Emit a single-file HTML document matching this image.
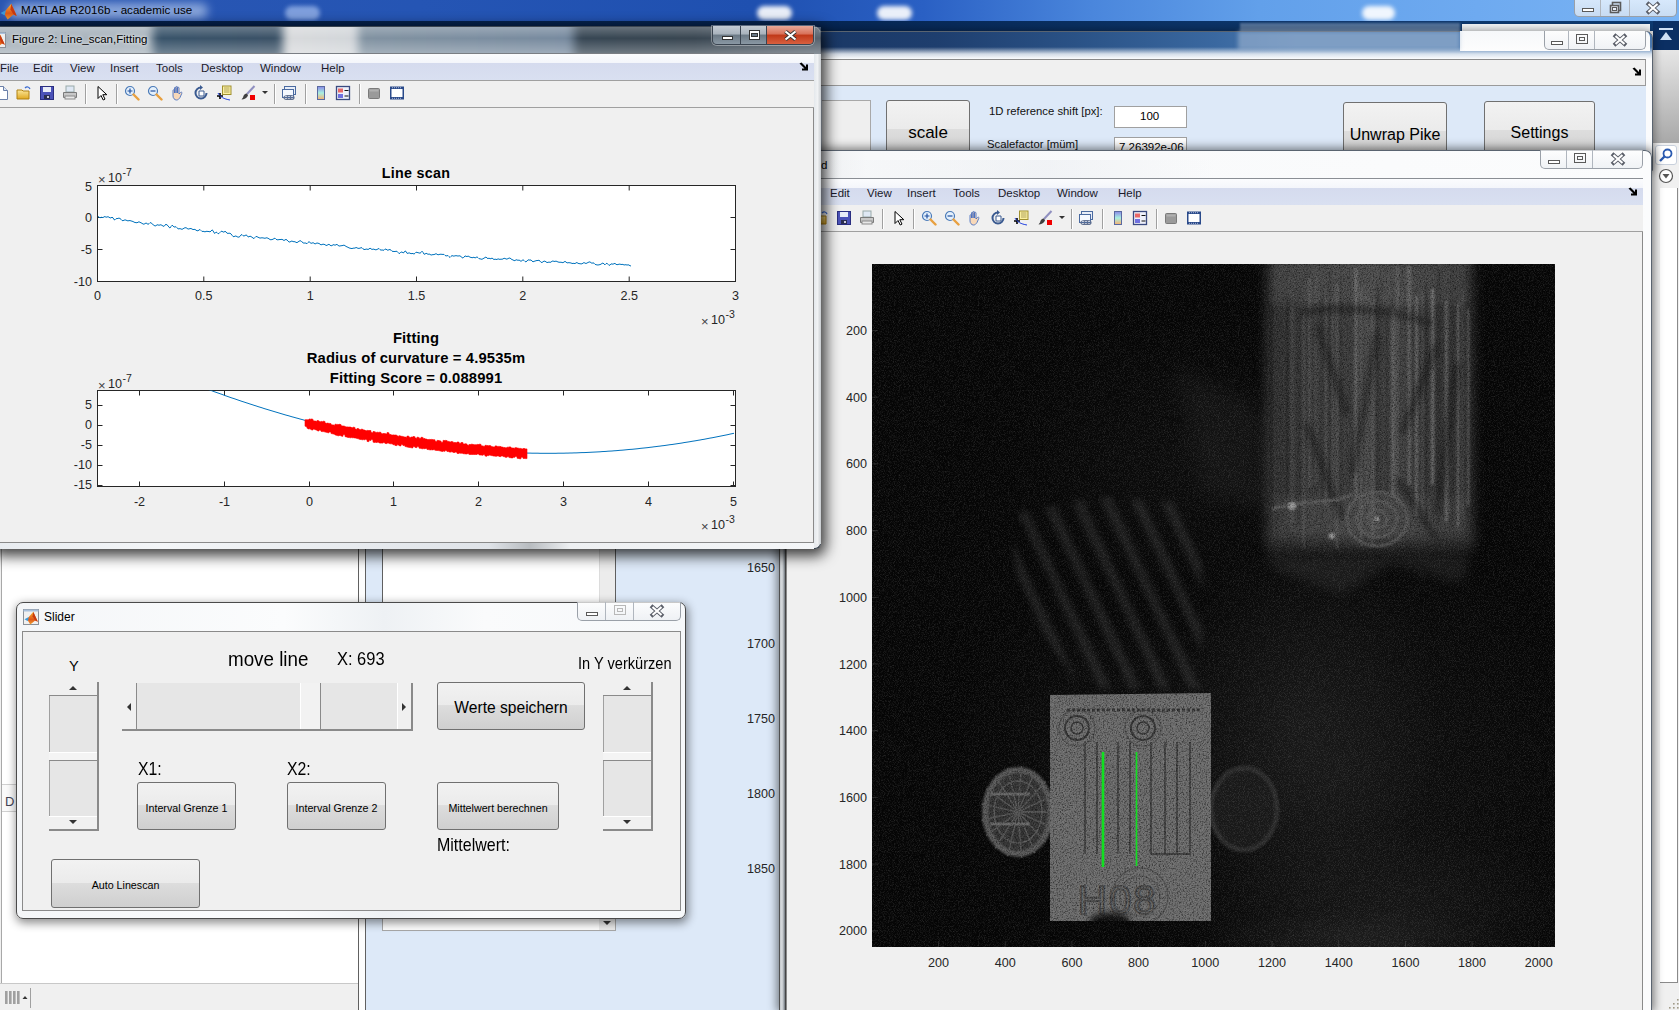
<!DOCTYPE html><html><head><meta charset="utf-8"><style>
*{box-sizing:border-box;margin:0;padding:0}
html,body{width:1679px;height:1010px;overflow:hidden;background:#f0f0f0;font-family:"Liberation Sans",sans-serif;position:relative}
.a{position:absolute}
.t{position:absolute;white-space:nowrap;line-height:1}
.mn{position:absolute;white-space:nowrap;line-height:1;font-size:11.5px;color:#1a1a2a}
.btn{position:absolute;border:1px solid #707070;border-radius:3px;background:linear-gradient(#f2f2f2 0%,#ebebeb 48%,#dddddd 49%,#cfcfcf 100%);text-align:center;color:#000;white-space:nowrap}
svg{position:absolute;overflow:visible}
</style></head><body>

<svg width="0" height="0" style="position:absolute">
<defs>
<linearGradient id="gcb" x1="0" y1="0" x2="0" y2="1"><stop offset="0" stop-color="#8a88e8"/><stop offset=".5" stop-color="#a8f0e0"/><stop offset="1" stop-color="#f8b070"/></linearGradient>
<linearGradient id="gfold" x1="0" y1="0" x2="0" y2="1"><stop offset="0" stop-color="#fbe79a"/><stop offset="1" stop-color="#e0a820"/></linearGradient>
<symbol id="i-new" viewBox="0 0 16 16"><path d="M2.5 1.5h7l4 4v9h-11z" fill="#fff" stroke="#6a7fa8"/><path d="M9.5 1.5v4h4" fill="#dde6f4" stroke="#6a7fa8"/></symbol>
<symbol id="i-open" viewBox="0 0 16 16"><path d="M1 5h5l1 1h6v8H1z" fill="url(#gfold)" stroke="#b08010"/><path d="M9 3c2-2 4-1 5 1" fill="none" stroke="#3a6ad0" stroke-width="1.3"/></symbol>
<symbol id="i-save" viewBox="0 0 16 16"><rect x="1.5" y="1.5" width="13" height="13" fill="#4b52b8" stroke="#2a2e80"/><rect x="4" y="2" width="8" height="5" fill="#e8ecf8"/><rect x="5" y="10" width="6" height="4" fill="#2a2e50"/><rect x="8" y="11" width="2" height="2" fill="#ccd"/></symbol>
<symbol id="i-print" viewBox="0 0 16 16"><rect x="4" y="1" width="8" height="6" fill="#dfe8f4" stroke="#9aa"/><path d="M1.5 7.5h13v5h-13z" fill="#c8c8c8" stroke="#7a7a7a"/><rect x="3" y="11" width="10" height="3" fill="#e8e8e8" stroke="#8a8a8a"/></symbol>
<symbol id="i-arrow" viewBox="0 0 16 16"><path d="M4 1.5v12l3-3 2.2 4.5 1.8-.9-2.2-4.4h4z" fill="#fff" stroke="#000" stroke-linejoin="round"/></symbol>
<symbol id="i-zin" viewBox="0 0 16 16"><circle cx="6" cy="6" r="4.5" fill="#e4f0fc" stroke="#4a7ab8" stroke-width="1.2"/><path d="M9.5 9.5l5 5" stroke="#e8a040" stroke-width="2.4" stroke-linecap="round"/><path d="M3.5 6h5M6 3.5v5" stroke="#2050a0" stroke-width="1.2"/></symbol>
<symbol id="i-zout" viewBox="0 0 16 16"><circle cx="6" cy="6" r="4.5" fill="#e4f0fc" stroke="#4a7ab8" stroke-width="1.2"/><path d="M9.5 9.5l5 5" stroke="#e8a040" stroke-width="2.4" stroke-linecap="round"/><path d="M3.5 6h5" stroke="#2050a0" stroke-width="1.2"/></symbol>
<symbol id="i-pan" viewBox="0 0 16 16"><path d="M3 9V5.5c0-1 1.5-1 1.5 0V8V3c0-1 1.5-1 1.5 0v5V2.2c0-1 1.5-1 1.5 0V8V3c0-1 1.5-1 1.5 0v6l1.5-1.5c.8-.8 2 0 1.3.9L10 12.5c-1 1.5-2 2.5-3.5 2.5C4.5 15 3 13 3 11z" fill="#f8d8b8" stroke="#4a70c0" stroke-width=".9"/></symbol>
<symbol id="i-rot" viewBox="0 0 16 16"><path d="M13.5 8A5.5 5.5 0 1 1 8 2.5" fill="none" stroke="#3a5a90" stroke-width="2"/><path d="M7 0l3 2.5L7 5z" fill="#3a5a90"/><path d="M6 6h5v5H6z" fill="#fff" stroke="#3a5a90"/></symbol>
<symbol id="i-dcur" viewBox="0 0 16 16"><rect x="6.5" y="1" width="8.5" height="8.5" fill="#fbf0a0" stroke="#a09030"/><path d="M8 3h5.5M8 5h5.5M8 7h5.5" stroke="#a09050" stroke-width=".8"/><path d="M1 11h6M4 8v6" stroke="#000" stroke-width="1.6"/><path d="M2 8c2 4 6 6 12 7" fill="none" stroke="#2040e0" stroke-width="1"/></symbol>
<symbol id="i-brush" viewBox="0 0 16 16"><path d="M14.5 1L7 9" stroke="#9090c0" stroke-width="2"/><path d="M7 8.5c-2 0-3.5 1.5-4 4L1.5 14.5c2.5 0 5.5-1.5 6.5-4z" fill="#404040"/><rect x="10" y="10" width="5" height="5" fill="#f00000"/></symbol>
<symbol id="i-link" viewBox="0 0 16 16"><rect x="3.5" y="1.5" width="11" height="8" fill="#e8eef8" stroke="#4a6aa0"/><rect x="1.5" y="4.5" width="11" height="8" fill="#f4f8ff" stroke="#4a6aa0"/><path d="M3 12.5c0-2 2-2 4-2s3 0 3 2-1 2-3 2-4 0-4-2z" fill="none" stroke="#607090" stroke-width="1.2"/><path d="M6 12.5c0-2 2-2 4-2s3 0 3 2-1 2-3 2-4 0-4-2z" fill="none" stroke="#607090" stroke-width="1.2"/></symbol>
<symbol id="i-cbar" viewBox="0 0 16 16"><rect x="4.5" y="1.5" width="7" height="13" fill="url(#gcb)" stroke="#5a6aa0"/></symbol>
<symbol id="i-leg" viewBox="0 0 16 16"><rect x="1.5" y="1.5" width="13" height="13" fill="#eef0fa" stroke="#3a4a80" stroke-width="1.3"/><rect x="3" y="3.5" width="5" height="4" fill="#e86868"/><rect x="3" y="9" width="5" height="4" fill="#7070e0"/><path d="M9.5 5.5h4M9.5 11h4" stroke="#111" stroke-width="1.2"/></symbol>
<symbol id="i-gray" viewBox="0 0 16 16"><rect x="2.5" y="3.5" width="11" height="10" rx="1" fill="#9a9a9a" stroke="#7a7a7a"/><rect x="3.5" y="4.5" width="9" height="2" fill="#b0b0b0"/></symbol>
<symbol id="i-frame" viewBox="0 0 16 16"><rect x="1" y="1.5" width="14" height="13" fill="#2a4a8a"/><rect x="2.5" y="4" width="11" height="8" fill="#fff"/><path d="M3 2.7h10M3 13.3h10" stroke="#c8d0e8" stroke-width=".8" stroke-dasharray="1 1"/></symbol>
<linearGradient id="gml" x1="0" y1="0" x2="0" y2="1"><stop offset="0" stop-color="#f8b030"/><stop offset=".6" stop-color="#e05818"/><stop offset="1" stop-color="#f0a030"/></linearGradient><symbol id="i-ml" viewBox="0 0 16 16"><path d="M0.5 9.5L5.5 6.8L8 8.8L4 11.5Z" fill="#3c9ad8"/><path d="M5.5 6.8L10.6 0.8L15.8 12.2L12.8 10.8L7.2 15.5L4.6 11.2Z" fill="url(#gml)"/><path d="M10.6 0.8L15.8 12.2L12.8 10.8L9.8 6Z" fill="#c83a10"/></symbol>
</defs></svg>

<div class="a" style="left:0px;top:0px;width:1679px;height:21px;background:linear-gradient(90deg,#2a56b2 0%,#2555b4 25%,#1f50b0 45%,#2a60c4 55%,#4a86dc 65%,#62a0ea 75%,#6eaaf0 88%,#7ab4f4 100%)"></div>
<div class="a" style="left:285px;top:6px;width:35px;height:14px;background:rgba(200,220,255,.55);border-radius:8px;filter:blur(2px)"></div>
<div class="a" style="left:757px;top:6px;width:35px;height:14px;background:rgba(255,255,255,.9);border-radius:8px;filter:blur(2px)"></div>
<div class="a" style="left:877px;top:6px;width:35px;height:14px;background:rgba(255,255,255,.9);border-radius:8px;filter:blur(2px)"></div>
<div class="a" style="left:1362px;top:6px;width:33px;height:14px;background:rgba(255,255,255,.9);border-radius:8px;filter:blur(2px)"></div>
<div class="a" style="left:8px;top:3px;width:200px;height:16px;background:rgba(215,230,250,.55);border-radius:10px;filter:blur(5px)"></div>
<svg style="left:0px;top:3px" width="17" height="17"><use href="#i-ml"/></svg>
<div class="t" style="left:21px;top:4px;font-size:11.6px;color:#000;font-weight:400;">MATLAB R2016b - academic use</div>
<div class="a" style="left:1574px;top:0px;width:103px;height:17px;border-radius:0 0 5px 5px;overflow:hidden;border:1px solid #9aa0a8;border-top:none;background:linear-gradient(rgba(255,255,255,.7),rgba(235,238,242,.7))"><div class="a" style="left:25px;top:0;width:1px;height:17px;background:#b0b6be"></div><div class="a" style="left:54px;top:0;width:1px;height:17px;background:#b0b6be"></div><div class="a" style="left:7px;top:8px;width:12px;height:4px;border:1px solid #5a5a5a;background:#fff"></div><svg style="left:34px;top:1px" width="13" height="13"><rect x="3.5" y="1.5" width="8" height="8" fill="none" stroke="#5a5a5a" stroke-width="1.6"/><rect x="1.5" y="4.5" width="8" height="7" fill="#e8eef8" stroke="#5a5a5a" stroke-width="1.6"/><rect x="3.5" y="6.5" width="4" height="3" fill="none" stroke="#5a5a5a"/></svg><svg style="left:71px;top:2px" width="14" height="12"><path d="M2.5 2l9 8M11.5 2l-9 8" stroke="#5a5e68" stroke-width="4" stroke-linecap="square"/><path d="M2.5 2l9 8M11.5 2l-9 8" stroke="#fff" stroke-width="2.2"/></svg></div>
<div class="a" style="left:0px;top:21px;width:1679px;height:10px;background:linear-gradient(90deg,#04204c 0px,#062654 820px,#0c3468 1200px,#0e3a70 1679px)"></div>
<div class="a" style="left:1240px;top:23px;width:220px;height:9px;background:rgba(160,180,205,.5);filter:blur(1px)"></div>
<div class="a" style="left:1462px;top:24px;width:188px;height:7px;background:#f4f6f8"></div>
<div class="a" style="left:1653px;top:21px;width:26px;height:29px;background:#0b2f63"></div>
<svg style="left:1657px;top:27px" width="18" height="16"><path d="M2 2h14" stroke="#cfe0f4" stroke-width="2"/><path d="M9 5l6 8H3z" fill="#cfe0f4"/></svg>
<div class="a" style="left:1653px;top:50px;width:26px;height:93px;background:linear-gradient(#e6e6e6,#a8a8a8)"></div>
<div class="a" style="left:1653px;top:143px;width:26px;height:22px;background:#f0f0f0"></div>
<div class="a" style="left:1655px;top:145px;width:22px;height:20px;background:#fff;border:1px solid #c8d0dc;border-radius:3px"></div>
<svg style="left:1658px;top:148px" width="16" height="14"><circle cx="9.5" cy="5.5" r="4" fill="none" stroke="#2a5ab0" stroke-width="1.8"/><path d="M6.5 8.5L2 13" stroke="#2a5ab0" stroke-width="2.4"/></svg>
<div class="a" style="left:1653px;top:165px;width:26px;height:23px;background:#f0f0f0"></div>
<svg style="left:1658px;top:168px" width="16" height="16"><circle cx="8" cy="8" r="6.5" fill="#fff" stroke="#555" stroke-width="1.2"/><path d="M4.5 6h7L8 10.5z" fill="#555"/></svg>
<div class="a" style="left:1653px;top:188px;width:26px;height:822px;background:#f0f0f0"></div>
<div class="a" style="left:1660px;top:188px;width:18px;height:795px;background:#fff;border-right:1px solid #8a8a8a;border-bottom:1px solid #8a8a8a"></div>
<svg style="left:1667px;top:997px" width="12" height="12"><rect x="10" y="2" width="1.6" height="1.6" fill="#a09a88"/><rect x="6" y="6" width="1.6" height="1.6" fill="#a09a88"/><rect x="10" y="6" width="1.6" height="1.6" fill="#a09a88"/><rect x="2" y="10" width="1.6" height="1.6" fill="#a09a88"/><rect x="6" y="10" width="1.6" height="1.6" fill="#a09a88"/><rect x="10" y="10" width="1.6" height="1.6" fill="#a09a88"/></svg>
<div class="a" style="left:1px;top:549px;width:1px;height:434px;background:#a8a8a8"></div>
<div class="a" style="left:2px;top:549px;width:356px;height:434px;background:#fff"></div>
<div class="a" style="left:2px;top:784px;width:14px;height:28px;border-top:1px solid #d0d0d0;border-bottom:1px solid #d0d0d0;background:#fafafa"></div>
<div class="t" style="left:5px;top:795px;font-size:13px;color:#445;font-weight:400;">D</div>
<div class="a" style="left:358px;top:549px;width:1px;height:461px;background:#606060"></div>
<div class="a" style="left:359px;top:549px;width:6px;height:461px;background:#fdfdfd"></div>
<div class="a" style="left:365px;top:549px;width:1px;height:461px;background:#606060"></div>
<div class="a" style="left:366px;top:549px;width:413px;height:461px;background:#dde9f8"></div>
<div class="a" style="left:382px;top:549px;width:1px;height:369px;background:#606060"></div>
<div class="a" style="left:383px;top:549px;width:216px;height:369px;background:#fff"></div>
<div class="a" style="left:599px;top:549px;width:16px;height:369px;background:#ececec;border-left:1px solid #dcdcdc"></div>
<div class="a" style="left:382px;top:918px;width:234px;height:13px;background:#fff;border:1px solid #a8a8a8;border-top:none"></div>
<div class="a" style="left:599px;top:918px;width:16px;height:12px;background:#ececec"></div>
<svg style="left:603px;top:921px" width="8" height="5"><path d="M0 0h8L4 4z" fill="#333"/></svg>
<div class="a" style="left:0px;top:983px;width:358px;height:27px;background:#f0f0f0;border-top:1px solid #c8c8c8"></div>
<svg style="left:4px;top:990px" width="28" height="14"><rect x="1" y="1" width="2.6" height="13" fill="#a0a0a0"/><rect x="5" y="1" width="2.6" height="13" fill="#a0a0a0"/><rect x="9" y="1" width="2.6" height="13" fill="#a0a0a0"/><rect x="13" y="1" width="2.6" height="13" fill="#a0a0a0"/><path d="M18.5 9h5l-2.5-3z" fill="#333"/></svg>
<div class="a" style="left:30px;top:988px;width:1px;height:20px;background:#a0a0a0"></div>
<div class="t" style="left:700px;width:75px;text-align:right;top:561.5px;font-size:12.6px;color:#262626">1650</div>
<div class="t" style="left:700px;width:75px;text-align:right;top:637.5px;font-size:12.6px;color:#262626">1700</div>
<div class="t" style="left:700px;width:75px;text-align:right;top:712.5px;font-size:12.6px;color:#262626">1750</div>
<div class="t" style="left:700px;width:75px;text-align:right;top:787.5px;font-size:12.6px;color:#262626">1800</div>
<div class="t" style="left:700px;width:75px;text-align:right;top:862.5px;font-size:12.6px;color:#262626">1850</div>
<div class="a" style="left:615px;top:549px;width:1px;height:369px;background:#606060"></div>
<div class="a" style="left:815px;top:31px;width:838px;height:140px;box-shadow:0 0 8px 1px rgba(0,0,0,.4);border-radius:7px 7px 0 0"></div>
<div class="a" style="left:815px;top:31px;width:838px;height:140px;border:1px solid #5a6470;border-radius:7px 7px 0 0;background:linear-gradient(rgba(255,255,255,0) 0px,rgba(255,255,255,0) 15px,rgba(240,244,248,.85) 22px,#fbfcfd 27px),linear-gradient(90deg,#1a3866 0px,#1e3e6e 120px,#2a5286 260px,#3a68a0 400px,#4a78ae 480px)"></div>
<div class="a" style="left:1460px;top:31px;width:190px;height:20px;background:linear-gradient(#f6f8fa,#fdfdfd);border-radius:0 6px 0 0"></div>
<div class="a" style="left:1238px;top:31px;width:222px;height:19px;background:rgba(170,190,215,.55);filter:blur(2px)"></div>
<div class="a" style="left:1544px;top:31px;width:102px;height:19px;border-radius:0 0 5px 5px;overflow:hidden;border:1px solid #9aa0a8;border-top:none;background:linear-gradient(rgba(255,255,255,.7),rgba(235,238,242,.7))"><div class="a" style="left:23px;top:0;width:1px;height:19px;background:#b0b6be"></div><div class="a" style="left:49px;top:0;width:1px;height:19px;background:#b0b6be"></div><div class="a" style="left:6px;top:10px;width:12px;height:4px;border:1px solid #5a5a5a;background:#fff"></div><div class="a" style="left:31px;top:3px;width:12px;height:10px;border:1px solid #5a5a5a"><div class="a" style="left:2px;top:2px;width:6px;height:4px;border:1px solid #5a5a5a"></div></div><svg style="left:68px;top:3px" width="14" height="12"><path d="M2.5 2l9 8M11.5 2l-9 8" stroke="#5a5e68" stroke-width="4" stroke-linecap="square"/><path d="M2.5 2l9 8M11.5 2l-9 8" stroke="#fff" stroke-width="2.2"/></svg></div>
<div class="a" style="left:821px;top:59px;width:825px;height:27px;background:#f0f0f0;border-top:1px solid #8a8a8a;border-bottom:1px solid #9a9a9a;border-right:1px solid #9a9a9a"></div>
<svg style="left:1631px;top:66px" width="12" height="12"><path d="M1.5 2.5l2-1 4.5 4.5V3.5h2v6h-6v-2h2.5z" fill="#000"/></svg>
<div class="a" style="left:821px;top:86px;width:825px;height:70px;background:#dde9f8"></div>
<div class="a" style="left:822px;top:100px;width:49px;height:56px;background:#efefef;border:1px solid #a8a8a8;border-left:none"></div>
<div class="btn" style="left:886px;top:100px;width:84px;height:60px;font-size:17px;padding-top:22px">scale</div>
<div class="t" style="left:989px;top:106px;font-size:11.3px;color:#111;font-weight:400;">1D reference shift [px]:</div>
<div class="a" style="left:1114px;top:106px;width:73px;height:22px;background:#fff;border:1px solid #a0a0a0"></div>
<div class="t" style="left:1140px;top:111px;font-size:11.5px;color:#000;font-weight:400;">100</div>
<div class="t" style="left:987px;top:139px;font-size:11.3px;color:#111;font-weight:400;">Scalefactor [m&uuml;m]</div>
<div class="a" style="left:1114px;top:137px;width:73px;height:22px;background:#fff;border:1px solid #a0a0a0"></div>
<div class="t" style="left:1119px;top:142px;font-size:11.5px;color:#000;font-weight:400;">7.26392e-06</div>
<div class="btn" style="left:1343px;top:102px;width:104px;height:60px;font-size:16px;padding-top:22.5px">Unwrap Pike</div>
<div class="btn" style="left:1484px;top:101px;width:111px;height:60px;font-size:16px;padding-top:21.5px">Settings</div>
<div class="a" style="left:779px;top:150px;width:873px;height:860px;box-shadow:0 0 10px 2px rgba(0,0,0,.5);border-radius:7px 7px 0 0"></div>
<div class="a" style="left:779px;top:150px;width:873px;height:860px;border:1px solid #5a6470;border-bottom:none;border-radius:7px 7px 0 0;background:linear-gradient(90deg,#e6e9ec,#f8f9fa 10%,#fbfcfd)"></div>
<div class="a" style="left:786px;top:160px;width:857px;height:19px;background:linear-gradient(90deg,rgba(255,255,255,0),rgba(235,238,242,.6) 30%,rgba(255,255,255,0) 50%)"></div>
<div class="t" style="left:821px;top:160px;font-size:11.5px;color:#000;font-weight:400;">d</div>
<div class="a" style="left:1540px;top:150px;width:103px;height:19px;border-radius:0 0 5px 5px;overflow:hidden;border:1px solid #9aa0a8;border-top:none;background:linear-gradient(rgba(255,255,255,.7),rgba(235,238,242,.7))"><div class="a" style="left:25px;top:0;width:1px;height:19px;background:#b0b6be"></div><div class="a" style="left:51px;top:0;width:1px;height:19px;background:#b0b6be"></div><div class="a" style="left:7px;top:10px;width:12px;height:4px;border:1px solid #5a5a5a;background:#fff"></div><div class="a" style="left:33px;top:3px;width:12px;height:10px;border:1px solid #5a5a5a"><div class="a" style="left:2px;top:2px;width:6px;height:4px;border:1px solid #5a5a5a"></div></div><svg style="left:70px;top:3px" width="14" height="12"><path d="M2.5 2l9 8M11.5 2l-9 8" stroke="#5a5e68" stroke-width="4" stroke-linecap="square"/><path d="M2.5 2l9 8M11.5 2l-9 8" stroke="#fff" stroke-width="2.2"/></svg></div>
<div class="a" style="left:786px;top:179px;width:857px;height:831px;background:#f0f0f0;border-left:1px solid #8a8a8a;border-right:1px solid #8a8a8a"></div>
<div class="a" style="left:779px;top:549px;width:7px;height:461px;background:linear-gradient(90deg,#505050 0px,#505050 1px,#c4c8cc 1px,#d8dcdf 3px,#9aa0a6 5px,#6a7076 6px,#454545 6px,#454545 7px)"></div>
<div class="a" style="left:786px;top:178px;width:857px;height:1px;background:#8a8e94"></div>
<div class="a" style="left:786px;top:179px;width:857px;height:27px;background:linear-gradient(#fbfcfe 0%,#f4f6fb 33%,#d5dbee 36%,#d9e0f1 100%);border-bottom:1px solid #a0a0a0"></div>
<div class="mn" style="left:830px;top:187.5px">Edit</div>
<div class="mn" style="left:867px;top:187.5px">View</div>
<div class="mn" style="left:907px;top:187.5px">Insert</div>
<div class="mn" style="left:953px;top:187.5px">Tools</div>
<div class="mn" style="left:998px;top:187.5px">Desktop</div>
<div class="mn" style="left:1057px;top:187.5px">Window</div>
<div class="mn" style="left:1118px;top:187.5px">Help</div>
<svg style="left:1627px;top:186px" width="12" height="12"><path d="M1.5 2.5l2-1 4.5 4.5V3.5h2v6h-6v-2h2.5z" fill="#000"/></svg>
<div class="a" style="left:786px;top:205px;width:857px;height:27px;background:#f0f0f0;border-bottom:1px solid #a0a0a0"></div>
<svg style="left:791px;top:210px" width="16" height="16"><use href="#i-new"/></svg>
<svg style="left:813px;top:210px" width="16" height="16"><use href="#i-open"/></svg>
<svg style="left:836px;top:210px" width="16" height="16"><use href="#i-save"/></svg>
<svg style="left:859px;top:210px" width="16" height="16"><use href="#i-print"/></svg>
<div class="a" style="left:882px;top:209px;width:1px;height:20px;background:#a0a0a0;box-shadow:1px 0 0 #fff"></div>
<svg style="left:891px;top:210px" width="16" height="16"><use href="#i-arrow"/></svg>
<div class="a" style="left:913px;top:209px;width:1px;height:20px;background:#a0a0a0;box-shadow:1px 0 0 #fff"></div>
<svg style="left:921px;top:210px" width="16" height="16"><use href="#i-zin"/></svg>
<svg style="left:944px;top:210px" width="16" height="16"><use href="#i-zout"/></svg>
<svg style="left:967px;top:210px" width="16" height="16"><use href="#i-pan"/></svg>
<svg style="left:990px;top:210px" width="16" height="16"><use href="#i-rot"/></svg>
<svg style="left:1013px;top:210px" width="16" height="16"><use href="#i-dcur"/></svg>
<svg style="left:1037px;top:210px" width="16" height="16"><use href="#i-brush"/></svg>
<svg style="left:1059px;top:216px" width="6" height="4"><path d="M0 0h6L3 3z" fill="#333"/></svg>
<div class="a" style="left:1071px;top:209px;width:1px;height:20px;background:#a0a0a0;box-shadow:1px 0 0 #fff"></div>
<svg style="left:1078px;top:210px" width="16" height="16"><use href="#i-link"/></svg>
<div class="a" style="left:1102px;top:209px;width:1px;height:20px;background:#a0a0a0;box-shadow:1px 0 0 #fff"></div>
<svg style="left:1110px;top:210px" width="16" height="16"><use href="#i-cbar"/></svg>
<svg style="left:1132px;top:210px" width="16" height="16"><use href="#i-leg"/></svg>
<div class="a" style="left:1156px;top:209px;width:1px;height:20px;background:#a0a0a0;box-shadow:1px 0 0 #fff"></div>
<svg style="left:1163px;top:210px" width="16" height="16"><use href="#i-gray"/></svg>
<svg style="left:1186px;top:210px" width="16" height="16"><use href="#i-frame"/></svg>
<svg style="left:872px;top:264px;overflow:hidden" width="683" height="683" viewBox="0 0 683 683"><defs>
<filter id="nz" x="0" y="0" width="100%" height="100%" color-interpolation-filters="sRGB"><feTurbulence type="fractalNoise" baseFrequency="1.2" numOctaves="1" seed="3"/><feColorMatrix type="matrix" values="0 0 0 0 1  0 0 0 0 1  0 0 0 0 1  2.6 0 0 0 -1.15"/></filter>
<filter id="nzd" x="0" y="0" width="100%" height="100%" color-interpolation-filters="sRGB"><feTurbulence type="fractalNoise" baseFrequency=".7" numOctaves="2" seed="9"/><feColorMatrix type="matrix" values="0 0 0 0 0  0 0 0 0 0  0 0 0 0 0  2.4 0 0 0 -1.1"/></filter>
<filter id="b6" x="-30%" y="-30%" width="160%" height="160%" color-interpolation-filters="sRGB"><feGaussianBlur stdDeviation="6"/></filter>
<filter id="b3" x="-30%" y="-30%" width="160%" height="160%" color-interpolation-filters="sRGB"><feGaussianBlur stdDeviation="3"/></filter>
<filter id="b10" x="-30%" y="-30%" width="160%" height="160%" color-interpolation-filters="sRGB"><feGaussianBlur stdDeviation="10"/></filter>
<filter id="b1" x="-30%" y="-30%" width="160%" height="160%" color-interpolation-filters="sRGB"><feGaussianBlur stdDeviation="1"/></filter>
<radialGradient id="hz1"><stop offset="0" stop-color="#fff" stop-opacity=".045"/><stop offset="1" stop-color="#fff" stop-opacity="0"/></radialGradient>
<radialGradient id="hz2"><stop offset="0" stop-color="#fff" stop-opacity=".025"/><stop offset="1" stop-color="#fff" stop-opacity="0"/></radialGradient>
<linearGradient id="blk" x1="0" y1="0" x2="1" y2="0"><stop offset="0" stop-color="#333"/><stop offset=".5" stop-color="#424242"/><stop offset="1" stop-color="#303030"/></linearGradient>
<pattern id="vstr" width="13" height="40" patternUnits="userSpaceOnUse"><rect x="2" width="2" height="40" fill="#fff" fill-opacity=".12"/><rect x="7" width="3" height="40" fill="#000" fill-opacity=".15"/></pattern>
<pattern id="dstr" width="27" height="27" patternUnits="userSpaceOnUse" patternTransform="rotate(-25)"><rect width="10" height="27" fill="#fff" fill-opacity=".09"/></pattern>
<clipPath id="rcp"><path d="M178 431 L339 429 L339 657 L178 657 Z"/></clipPath>
</defs><rect width="683" height="683" fill="#050505"/><ellipse cx="470" cy="520" rx="260" ry="260" fill="url(#hz1)"/><ellipse cx="430" cy="460" rx="140" ry="190" fill="url(#hz1)"/><ellipse cx="480" cy="675" rx="160" ry="30" fill="url(#hz1)"/><g filter="url(#b6)"><path d="M392 270 L604 270 L590 320 L520 300 L470 330 L400 305 Z" fill="#fff" fill-opacity=".07"/></g><ellipse cx="300" cy="200" rx="170" ry="150" fill="url(#hz2)"/><ellipse cx="520" cy="650" rx="200" ry="90" fill="url(#hz1)"/><ellipse cx="220" cy="470" rx="140" ry="160" fill="url(#hz2)"/><g filter="url(#b6)"><rect x="394" y="-10" width="208" height="292" fill="url(#blk)"/></g><g filter="url(#b3)"><rect x="400" y="0" width="196" height="40" fill="#fff" fill-opacity=".07"/><rect x="400" y="232" width="196" height="40" fill="#fff" fill-opacity=".05"/></g><g filter="url(#b1)"><rect x="398.0" y="39" width="3" height="210" fill="#000" fill-opacity="0.23"/><rect x="405.0" y="31" width="2" height="240" fill="#000" fill-opacity="0.09"/><rect x="408.3" y="45" width="2.5" height="217" fill="#000" fill-opacity="0.08"/><rect x="413.9" y="31" width="3" height="199" fill="#000" fill-opacity="0.25"/><rect x="418.0" y="44" width="4" height="215" fill="#fff" fill-opacity="0.06"/><rect x="425.7" y="26" width="2.5" height="236" fill="#000" fill-opacity="0.14"/><rect x="430.9" y="50" width="1.5" height="235" fill="#fff" fill-opacity="0.15"/><rect x="436.4" y="14" width="2.5" height="210" fill="#fff" fill-opacity="0.12"/><rect x="442.6" y="3" width="3" height="218" fill="#fff" fill-opacity="0.07"/><rect x="449.0" y="23" width="2" height="260" fill="#000" fill-opacity="0.09"/><rect x="453.3" y="34" width="1.5" height="208" fill="#fff" fill-opacity="0.17"/><rect x="456.9" y="6" width="1.5" height="230" fill="#000" fill-opacity="0.25"/><rect x="459.8" y="34" width="1.5" height="198" fill="#fff" fill-opacity="0.15"/><rect x="464.1" y="20" width="2" height="265" fill="#fff" fill-opacity="0.14"/><rect x="467.1" y="11" width="4" height="235" fill="#000" fill-opacity="0.11"/><rect x="475.1" y="11" width="4" height="226" fill="#000" fill-opacity="0.07"/><rect x="482.8" y="4" width="2.5" height="230" fill="#fff" fill-opacity="0.22"/><rect x="488.5" y="23" width="1.5" height="260" fill="#fff" fill-opacity="0.18"/><rect x="492.7" y="31" width="4" height="209" fill="#fff" fill-opacity="0.08"/><rect x="498.5" y="37" width="4" height="244" fill="#fff" fill-opacity="0.10"/><rect x="504.2" y="21" width="3" height="206" fill="#000" fill-opacity="0.24"/><rect x="508.3" y="13" width="2.5" height="261" fill="#000" fill-opacity="0.10"/><rect x="513.9" y="49" width="2.5" height="179" fill="#000" fill-opacity="0.16"/><rect x="519.1" y="46" width="4" height="187" fill="#fff" fill-opacity="0.18"/><rect x="524.1" y="2" width="2.5" height="236" fill="#fff" fill-opacity="0.14"/><rect x="529.5" y="23" width="2" height="219" fill="#fff" fill-opacity="0.07"/><rect x="535.1" y="2" width="4" height="219" fill="#fff" fill-opacity="0.17"/><rect x="543.2" y="32" width="2.5" height="220" fill="#fff" fill-opacity="0.25"/><rect x="549.3" y="23" width="2.5" height="221" fill="#fff" fill-opacity="0.08"/><rect x="553.0" y="18" width="2" height="247" fill="#000" fill-opacity="0.22"/><rect x="559.1" y="25" width="3" height="196" fill="#fff" fill-opacity="0.25"/><rect x="565.4" y="4" width="3" height="258" fill="#000" fill-opacity="0.17"/><rect x="572.9" y="37" width="3" height="221" fill="#fff" fill-opacity="0.20"/><rect x="578.4" y="1" width="4" height="258" fill="#000" fill-opacity="0.07"/><rect x="585.1" y="39" width="2" height="224" fill="#fff" fill-opacity="0.25"/><rect x="589.8" y="31" width="1.5" height="223" fill="#fff" fill-opacity="0.13"/><rect x="595.0" y="45" width="2.5" height="197" fill="#fff" fill-opacity="0.19"/></g><g stroke="#141414" stroke-width="5" fill="none" filter="url(#b3)" opacity=".75"><path d="M445 60 L475 150 M505 70 L480 210 M565 80 L530 170 M585 100 L565 250 M435 160 L470 255 M525 215 L565 275 M430 50 C460 40 520 45 560 60"/></g><g filter="url(#b1)" fill="none" stroke="#5e5e5e" stroke-width="2.5"><ellipse cx="505" cy="255" rx="30" ry="27"/><ellipse cx="505" cy="255" rx="20" ry="18"/><ellipse cx="505" cy="255" rx="10" ry="9"/><path d="M400 245 C430 235 470 240 480 230" stroke-width="3"/></g><g filter="url(#b1)" fill="#999"><circle cx="420" cy="242" r="4"/><circle cx="460" cy="272" r="3"/><circle cx="505" cy="255" r="2.5"/></g><rect x="385" y="0" width="225" height="295" filter="url(#nzd)" opacity=".6"/><g filter="url(#b3)"><path d="M135 250 L230 232 L320 240 L330 300 L330 425 L210 425 L150 340 Z" fill="url(#dstr)"/></g><g filter="url(#b10)"><path d="M300 100 L390 140 L400 250 L330 230 Z" fill="#fff" fill-opacity=".04"/></g><clipPath id="ecp"><ellipse cx="146" cy="548" rx="37" ry="46"/></clipPath><g filter="url(#b1)"><ellipse cx="146" cy="548" rx="33" ry="42" fill="#343434" stroke="#5a5a5a" stroke-width="6"/></g><g clip-path="url(#ecp)" stroke="#555" stroke-width="1.5" fill="none"><path d="M146 548 L186.0 548.0"/><path d="M146 548 L183.3 565.3"/><path d="M146 548 L175.6 580.3"/><path d="M146 548 L163.8 591.0"/><path d="M146 548 L149.7 595.8"/><path d="M146 548 L135.1 594.2"/><path d="M146 548 L121.9 586.3"/><path d="M146 548 L112.0 573.3"/><path d="M146 548 L106.7 556.9"/><path d="M146 548 L106.7 539.3"/><path d="M146 548 L112.0 522.8"/><path d="M146 548 L121.8 509.8"/><path d="M146 548 L135.0 501.9"/><path d="M146 548 L149.6 500.2"/><path d="M146 548 L163.7 505.0"/><path d="M146 548 L175.5 515.6"/><path d="M146 548 L183.3 530.5"/><path d="M146 548 L186.0 547.8"/><ellipse cx="146" cy="548" rx="24" ry="31"/><path d="M118 530h40M118 560h40" stroke="#666" stroke-width="3"/><rect x="100" y="500" width="90" height="100" filter="url(#nzd)" opacity=".55"/></g><g filter="url(#b1)"><ellipse cx="372" cy="545" rx="33" ry="41" fill="#181818" stroke="#2a2a2a" stroke-width="5"/></g><path d="M178 431 L339 429 L339 657 L178 657 Z" fill="#6c6c6c"/><g clip-path="url(#rcp)"><g fill="none" stroke="#363636" stroke-width="1.4"><path d="M213 478 V590"/><path d="M225 478 V590"/><path d="M246 478 V590"/><path d="M258 478 V590"/><path d="M279 478 V590"/><path d="M293 478 V590"/><path d="M305 478 V590"/><path d="M318 478 V590"/><path d="M279 590 H318"/><circle cx="205" cy="464" r="12" stroke-width="2"/><circle cx="271" cy="464" r="12" stroke-width="2"/><circle cx="205" cy="464" r="6"/><circle cx="271" cy="464" r="6"/><circle cx="205" cy="464" r="18" stroke="#555"/><circle cx="271" cy="464" r="18" stroke="#555"/><text x="206" y="650" font-family="Liberation Sans" font-size="40" letter-spacing="2" stroke="#4a4a4a" stroke-width="2" fill="none">H08</text><circle cx="268" cy="632" r="28" stroke="#555" stroke-width="1.5"/><circle cx="268" cy="632" r="20" stroke="#5a5a5a" stroke-width="1.5"/><path d="M195 446 H330" stroke-dasharray="3 2" stroke-width="3"/></g><rect x="170" y="420" width="180" height="250" filter="url(#nzd)" opacity=".6"/><g filter="url(#b3)"><ellipse cx="238" cy="657" rx="20" ry="8" fill="#0c0c0c"/></g></g><rect width="683" height="683" filter="url(#nz)" opacity=".13"/><path d="M231 488 V603" stroke="#10e020" stroke-width="2.6"/><path d="M264.5 488 V602" stroke="#10e020" stroke-width="1.6"/></svg>
<svg style="left:0;top:0" width="1679" height="1010"><path d="M938.5 947v-6M872 330.5h6" stroke="#8a8a8a" stroke-opacity=".25" stroke-width="1"/><path d="M1005.2 947v-6M872 397.2h6" stroke="#8a8a8a" stroke-opacity=".25" stroke-width="1"/><path d="M1071.9 947v-6M872 463.9h6" stroke="#8a8a8a" stroke-opacity=".25" stroke-width="1"/><path d="M1138.6 947v-6M872 530.6h6" stroke="#8a8a8a" stroke-opacity=".25" stroke-width="1"/><path d="M1205.3 947v-6M872 597.3h6" stroke="#8a8a8a" stroke-opacity=".25" stroke-width="1"/><path d="M1272.0 947v-6M872 664.0h6" stroke="#8a8a8a" stroke-opacity=".25" stroke-width="1"/><path d="M1338.7 947v-6M872 730.7h6" stroke="#8a8a8a" stroke-opacity=".25" stroke-width="1"/><path d="M1405.4 947v-6M872 797.4h6" stroke="#8a8a8a" stroke-opacity=".25" stroke-width="1"/><path d="M1472.1 947v-6M872 864.1h6" stroke="#8a8a8a" stroke-opacity=".25" stroke-width="1"/><path d="M1538.8 947v-6M872 930.8h6" stroke="#8a8a8a" stroke-opacity=".25" stroke-width="1"/></svg>
<div class="t" style="left:908.5px;width:60px;text-align:center;top:956.5px;font-size:12.6px;color:#262626">200</div>
<div class="t" style="left:800px;width:67px;text-align:right;top:325.0px;font-size:12.6px;color:#262626">200</div>
<div class="t" style="left:975.2px;width:60px;text-align:center;top:956.5px;font-size:12.6px;color:#262626">400</div>
<div class="t" style="left:800px;width:67px;text-align:right;top:391.7px;font-size:12.6px;color:#262626">400</div>
<div class="t" style="left:1041.9px;width:60px;text-align:center;top:956.5px;font-size:12.6px;color:#262626">600</div>
<div class="t" style="left:800px;width:67px;text-align:right;top:458.4px;font-size:12.6px;color:#262626">600</div>
<div class="t" style="left:1108.6px;width:60px;text-align:center;top:956.5px;font-size:12.6px;color:#262626">800</div>
<div class="t" style="left:800px;width:67px;text-align:right;top:525.1px;font-size:12.6px;color:#262626">800</div>
<div class="t" style="left:1175.3px;width:60px;text-align:center;top:956.5px;font-size:12.6px;color:#262626">1000</div>
<div class="t" style="left:800px;width:67px;text-align:right;top:591.8px;font-size:12.6px;color:#262626">1000</div>
<div class="t" style="left:1242.0px;width:60px;text-align:center;top:956.5px;font-size:12.6px;color:#262626">1200</div>
<div class="t" style="left:800px;width:67px;text-align:right;top:658.5px;font-size:12.6px;color:#262626">1200</div>
<div class="t" style="left:1308.7px;width:60px;text-align:center;top:956.5px;font-size:12.6px;color:#262626">1400</div>
<div class="t" style="left:800px;width:67px;text-align:right;top:725.2px;font-size:12.6px;color:#262626">1400</div>
<div class="t" style="left:1375.4px;width:60px;text-align:center;top:956.5px;font-size:12.6px;color:#262626">1600</div>
<div class="t" style="left:800px;width:67px;text-align:right;top:791.9px;font-size:12.6px;color:#262626">1600</div>
<div class="t" style="left:1442.1px;width:60px;text-align:center;top:956.5px;font-size:12.6px;color:#262626">1800</div>
<div class="t" style="left:800px;width:67px;text-align:right;top:858.6px;font-size:12.6px;color:#262626">1800</div>
<div class="t" style="left:1508.8px;width:60px;text-align:center;top:956.5px;font-size:12.6px;color:#262626">2000</div>
<div class="t" style="left:800px;width:67px;text-align:right;top:925.3px;font-size:12.6px;color:#262626">2000</div>
<div class="a" style="left:-8px;top:26px;width:829px;height:523px;border-radius:7px;box-shadow:2px 4px 14px 3px rgba(0,0,0,.75)"></div>
<div class="a" style="left:-8px;top:26px;width:829px;height:523px;border:1px solid #3a4450;border-radius:7px;overflow:hidden;background:#c8d0d6"><div class="a" style="left:-10px;top:-10px;width:850px;height:50px;filter:blur(3px);background:linear-gradient(90deg,#a0acb6 0px,#a2aeb8 165px,#2e4a62 175px,#30485e 295px,#d6d8da 305px,#d0d4d8 370px,#7a8c9c 380px,#70849a 585px,#2c3c4a 597px,#2e3c48 712px,#4e5a66 838px)"></div></div>
<div class="a" style="left:0px;top:27px;width:821px;height:28px;background:linear-gradient(rgba(255,255,255,.28),rgba(255,255,255,.05) 40%,rgba(255,255,255,.35) 100%)"></div>
<div class="a" style="left:0px;top:543px;width:815px;height:6px;background:linear-gradient(90deg,#e8ecf0,#f4f6f8 20%,#dfe3e8 60%,#b8bcc0 65%,#eef0f2 70%,#f4f6f8)"></div>
<div class="a" style="left:814px;top:543px;width:7px;height:6px;background:#e8ebee;border-radius:0 0 6px 0;border-right:1px solid #3a4450;border-bottom:1px solid #3a4450"></div>
<div class="a" style="left:814px;top:54px;width:7px;height:490px;background:linear-gradient(90deg,#e4e8ec,#f0f2f4 50%,#c8ccd0)"></div>
<svg style="left:-10px;top:32px" width="16" height="16"><rect x=".5" y=".5" width="15" height="15" fill="#eee" stroke="#8a9098"/><rect x=".5" y=".5" width="15" height="1.5" fill="#a8c0dc"/><use href="#i-ml" x="1" y="2" width="14" height="14"/></svg>
<div class="t" style="left:12px;top:34px;font-size:11.5px;color:#000;font-weight:400;text-shadow:0 0 6px rgba(255,255,255,.8),0 0 3px rgba(255,255,255,.9)">Figure 2: Line_scan,Fitting</div>
<div class="a" style="left:712px;top:26px;width:102px;height:19px;border-radius:0 0 5px 5px;overflow:hidden;border:1px solid #3a4450;border-top:none;box-shadow:0 0 0 1px rgba(255,255,255,.35)">
<div class="a" style="left:0;top:0;width:28px;height:18px;background:linear-gradient(#c4ccd4 0%,#a8b2bc 45%,#6a7884 50%,#8a98a4 100%);border-right:1px solid #3a4450"></div>
<div class="a" style="left:28px;top:0;width:26px;height:18px;background:linear-gradient(#c4ccd4 0%,#a8b2bc 45%,#6a7884 50%,#8a98a4 100%);border-right:1px solid #3a4450"></div>
<div class="a" style="left:54px;top:0;width:47px;height:18px;background:linear-gradient(#e8a898 0%,#d87058 45%,#c03818 50%,#d86040 100%)"></div>
<div class="a" style="left:9px;top:10px;width:11px;height:4px;background:#fff;border:1px solid #333"></div>
<div class="a" style="left:36px;top:4px;width:11px;height:10px;border:1px solid #333;background:#fff"><div class="a" style="left:1px;top:2px;width:7px;height:4px;background:#6a7884;border:1px solid #333"></div></div>
<svg style="left:71px;top:4px" width="13" height="11"><path d="M1.5 1.5l10 8M11.5 1.5l-10 8" stroke="#333" stroke-width="4"/><path d="M1.5 1.5l10 8M11.5 1.5l-10 8" stroke="#fff" stroke-width="2.2"/></svg>
</div>
<div class="a" style="left:0px;top:54px;width:814px;height:489px;background:#f0f0f0;border-right:1px solid #8a8a8a;border-bottom:1px solid #8a8a8a"></div>
<div class="a" style="left:0px;top:53px;width:814px;height:1px;background:#7a7e84"></div>
<div class="a" style="left:0px;top:54px;width:814px;height:27px;background:linear-gradient(#fbfcfe 0%,#f4f6fb 33%,#d5dbee 36%,#d9e0f1 100%);border-bottom:1px solid #a0a0a0"></div>
<div class="mn" style="left:0px;top:62.5px">File</div>
<div class="mn" style="left:33px;top:62.5px">Edit</div>
<div class="mn" style="left:70px;top:62.5px">View</div>
<div class="mn" style="left:110px;top:62.5px">Insert</div>
<div class="mn" style="left:156px;top:62.5px">Tools</div>
<div class="mn" style="left:201px;top:62.5px">Desktop</div>
<div class="mn" style="left:260px;top:62.5px">Window</div>
<div class="mn" style="left:321px;top:62.5px">Help</div>
<svg style="left:798px;top:61px" width="12" height="12"><path d="M1.5 2.5l2-1 4.5 4.5V3.5h2v6h-6v-2h2.5z" fill="#000"/></svg>
<div class="a" style="left:0px;top:81px;width:814px;height:27px;background:#f0f0f0;border-bottom:1px solid #a0a0a0"></div>
<svg style="left:-6px;top:85px" width="16" height="16"><use href="#i-new"/></svg>
<svg style="left:16px;top:85px" width="16" height="16"><use href="#i-open"/></svg>
<svg style="left:39px;top:85px" width="16" height="16"><use href="#i-save"/></svg>
<svg style="left:62px;top:85px" width="16" height="16"><use href="#i-print"/></svg>
<div class="a" style="left:85px;top:84px;width:1px;height:20px;background:#a0a0a0;box-shadow:1px 0 0 #fff"></div>
<svg style="left:94px;top:85px" width="16" height="16"><use href="#i-arrow"/></svg>
<div class="a" style="left:116px;top:84px;width:1px;height:20px;background:#a0a0a0;box-shadow:1px 0 0 #fff"></div>
<svg style="left:124px;top:85px" width="16" height="16"><use href="#i-zin"/></svg>
<svg style="left:147px;top:85px" width="16" height="16"><use href="#i-zout"/></svg>
<svg style="left:170px;top:85px" width="16" height="16"><use href="#i-pan"/></svg>
<svg style="left:193px;top:85px" width="16" height="16"><use href="#i-rot"/></svg>
<svg style="left:216px;top:85px" width="16" height="16"><use href="#i-dcur"/></svg>
<svg style="left:240px;top:85px" width="16" height="16"><use href="#i-brush"/></svg>
<svg style="left:262px;top:91px" width="6" height="4"><path d="M0 0h6L3 3z" fill="#333"/></svg>
<div class="a" style="left:274px;top:84px;width:1px;height:20px;background:#a0a0a0;box-shadow:1px 0 0 #fff"></div>
<svg style="left:281px;top:85px" width="16" height="16"><use href="#i-link"/></svg>
<div class="a" style="left:305px;top:84px;width:1px;height:20px;background:#a0a0a0;box-shadow:1px 0 0 #fff"></div>
<svg style="left:313px;top:85px" width="16" height="16"><use href="#i-cbar"/></svg>
<svg style="left:335px;top:85px" width="16" height="16"><use href="#i-leg"/></svg>
<div class="a" style="left:359px;top:84px;width:1px;height:20px;background:#a0a0a0;box-shadow:1px 0 0 #fff"></div>
<svg style="left:366px;top:85px" width="16" height="16"><use href="#i-gray"/></svg>
<svg style="left:389px;top:85px" width="16" height="16"><use href="#i-frame"/></svg>
<svg style="left:0;top:0" width="821" height="549" viewBox="0 0 821 549"><rect x="97.5" y="185.5" width="638.0" height="96.0" fill="#fff" stroke="#262626" stroke-width="1"/><path d="M97.5 185.5v5M97.5 281.5v-5" stroke="#262626"/><path d="M203.8 185.5v5M203.8 281.5v-5" stroke="#262626"/><path d="M310.2 185.5v5M310.2 281.5v-5" stroke="#262626"/><path d="M416.5 185.5v5M416.5 281.5v-5" stroke="#262626"/><path d="M522.8 185.5v5M522.8 281.5v-5" stroke="#262626"/><path d="M629.2 185.5v5M629.2 281.5v-5" stroke="#262626"/><path d="M735.5 185.5v5M735.5 281.5v-5" stroke="#262626"/><path d="M97.5 185.5h5M735.5 185.5h-5" stroke="#262626"/><path d="M97.5 217.5h5M735.5 217.5h-5" stroke="#262626"/><path d="M97.5 249.5h5M735.5 249.5h-5" stroke="#262626"/><path d="M97.5 281.5h5M735.5 281.5h-5" stroke="#262626"/><path d="M98.0 216.4 L99.0 217.1 L100.0 217.9 L101.0 217.3 L102.0 217.3 L103.0 217.7 L104.0 216.8 L105.0 216.6 L106.0 217.2 L107.0 217.0 L108.0 216.7 L109.0 217.2 L110.0 217.9 L111.0 217.9 L112.0 217.2 L113.0 217.8 L114.0 219.7 L115.0 219.8 L116.0 218.7 L117.0 218.6 L118.0 218.4 L119.0 218.1 L120.0 218.5 L121.0 219.3 L122.0 220.5 L123.0 220.7 L124.0 220.2 L125.0 219.9 L126.0 220.1 L127.0 220.6 L128.0 220.9 L129.0 220.6 L130.0 220.6 L131.0 220.9 L132.0 221.2 L133.0 221.5 L134.0 222.1 L135.0 222.5 L136.0 222.6 L137.0 222.8 L138.0 222.2 L139.0 221.8 L140.0 222.3 L141.0 222.8 L142.0 223.3 L143.0 224.0 L144.0 224.2 L145.0 223.6 L146.0 223.0 L147.0 223.5 L148.0 224.4 L149.0 223.7 L150.0 222.7 L151.0 222.8 L152.0 223.7 L153.0 224.6 L154.0 225.3 L155.0 226.0 L156.0 225.7 L157.0 224.8 L158.0 224.9 L159.0 225.3 L160.0 224.9 L161.0 224.8 L162.0 225.4 L163.0 226.0 L164.0 226.4 L165.0 225.1 L166.0 224.2 L167.0 225.0 L168.0 225.7 L169.0 227.3 L170.0 228.0 L171.0 226.5 L172.0 225.3 L173.0 225.8 L174.0 227.0 L175.0 227.0 L176.0 226.7 L177.0 227.7 L178.0 228.9 L179.0 228.8 L180.0 228.6 L181.0 229.0 L182.0 229.3 L183.0 228.9 L184.0 228.1 L185.0 227.8 L186.0 227.7 L187.0 228.3 L188.0 229.1 L189.0 228.9 L190.0 228.6 L191.0 228.5 L192.0 229.0 L193.0 229.6 L194.0 229.4 L195.0 229.4 L196.0 230.2 L197.0 230.7 L198.0 230.8 L199.0 230.0 L200.0 229.5 L201.0 230.5 L202.0 231.5 L203.0 231.3 L204.0 231.5 L205.0 231.9 L206.0 231.4 L207.0 231.3 L208.0 231.5 L209.0 231.5 L210.0 231.9 L211.0 231.1 L212.0 229.9 L213.0 230.6 L214.0 232.8 L215.0 233.4 L216.0 232.1 L217.0 232.5 L218.0 233.7 L219.0 233.5 L220.0 232.4 L221.0 231.4 L222.0 231.2 L223.0 232.0 L224.0 232.1 L225.0 231.3 L226.0 231.9 L227.0 233.2 L228.0 233.4 L229.0 233.2 L230.0 233.3 L231.0 233.9 L232.0 235.2 L233.0 236.5 L234.0 236.7 L235.0 236.1 L236.0 236.0 L237.0 236.7 L238.0 237.1 L239.0 237.1 L240.0 236.4 L241.0 234.9 L242.0 234.6 L243.0 235.7 L244.0 236.0 L245.0 235.5 L246.0 235.0 L247.0 235.4 L248.0 236.9 L249.0 236.8 L250.0 236.1 L251.0 236.6 L252.0 237.2 L253.0 238.0 L254.0 238.6 L255.0 237.4 L256.0 236.4 L257.0 236.7 L258.0 237.2 L259.0 237.7 L260.0 238.1 L261.0 237.9 L262.0 237.8 L263.0 237.9 L264.0 238.1 L265.0 238.3 L266.0 237.9 L267.0 237.8 L268.0 238.3 L269.0 238.8 L270.0 239.6 L271.0 239.8 L272.0 239.5 L273.0 239.3 L274.0 238.5 L275.0 238.2 L276.0 239.2 L277.0 239.8 L278.0 239.8 L279.0 239.6 L280.0 239.5 L281.0 239.5 L282.0 239.3 L283.0 239.9 L284.0 240.5 L285.0 239.9 L286.0 239.4 L287.0 240.0 L288.0 241.1 L289.0 242.0 L290.0 242.0 L291.0 241.3 L292.0 241.0 L293.0 241.6 L294.0 241.7 L295.0 241.7 L296.0 242.4 L297.0 242.6 L298.0 242.0 L299.0 241.2 L300.0 240.8 L301.0 240.9 L302.0 241.9 L303.0 242.8 L304.0 243.2 L305.0 242.9 L306.0 243.2 L307.0 243.7 L308.0 242.5 L309.0 241.6 L310.0 242.5 L311.0 243.3 L312.0 243.1 L313.0 242.7 L314.0 243.2 L315.0 244.0 L316.0 243.5 L317.0 242.9 L318.0 243.3 L319.0 243.4 L320.0 244.2 L321.0 244.9 L322.0 244.5 L323.0 244.2 L324.0 244.3 L325.0 244.7 L326.0 245.4 L327.0 245.4 L328.0 244.6 L329.0 244.3 L330.0 245.1 L331.0 245.8 L332.0 245.6 L333.0 244.8 L334.0 244.7 L335.0 245.3 L336.0 244.7 L337.0 244.4 L338.0 245.3 L339.0 246.0 L340.0 246.0 L341.0 245.7 L342.0 245.7 L343.0 245.4 L344.0 245.1 L345.0 245.7 L346.0 246.4 L347.0 246.9 L348.0 247.3 L349.0 247.9 L350.0 248.2 L351.0 248.4 L352.0 248.6 L353.0 248.2 L354.0 248.1 L355.0 248.1 L356.0 247.5 L357.0 247.8 L358.0 248.4 L359.0 248.3 L360.0 248.2 L361.0 247.7 L362.0 247.8 L363.0 248.8 L364.0 249.5 L365.0 249.5 L366.0 249.1 L367.0 249.1 L368.0 249.5 L369.0 249.0 L370.0 248.1 L371.0 248.8 L372.0 249.5 L373.0 249.1 L374.0 249.2 L375.0 249.7 L376.0 249.8 L377.0 249.5 L378.0 248.9 L379.0 248.5 L380.0 249.6 L381.0 250.2 L382.0 249.9 L383.0 250.2 L384.0 250.2 L385.0 249.2 L386.0 249.0 L387.0 250.0 L388.0 250.2 L389.0 249.7 L390.0 249.5 L391.0 250.2 L392.0 251.2 L393.0 251.4 L394.0 251.5 L395.0 251.5 L396.0 251.3 L397.0 251.3 L398.0 252.4 L399.0 253.6 L400.0 253.1 L401.0 252.1 L402.0 252.0 L403.0 252.8 L404.0 252.6 L405.0 251.0 L406.0 251.4 L407.0 253.3 L408.0 253.3 L409.0 252.8 L410.0 253.2 L411.0 253.7 L412.0 253.5 L413.0 253.5 L414.0 254.1 L415.0 253.3 L416.0 252.2 L417.0 252.4 L418.0 252.7 L419.0 252.9 L420.0 253.2 L421.0 252.5 L422.0 251.2 L423.0 252.3 L424.0 254.2 L425.0 254.1 L426.0 253.3 L427.0 253.6 L428.0 254.4 L429.0 254.0 L430.0 254.3 L431.0 255.1 L432.0 254.8 L433.0 254.6 L434.0 254.6 L435.0 254.2 L436.0 253.7 L437.0 254.2 L438.0 254.9 L439.0 254.5 L440.0 254.3 L441.0 254.2 L442.0 254.4 L443.0 254.4 L444.0 254.4 L445.0 255.4 L446.0 255.9 L447.0 255.8 L448.0 255.5 L449.0 256.6 L450.0 257.5 L451.0 256.4 L452.0 255.5 L453.0 256.0 L454.0 256.1 L455.0 255.8 L456.0 255.7 L457.0 255.8 L458.0 256.1 L459.0 255.8 L460.0 255.9 L461.0 256.6 L462.0 257.5 L463.0 258.1 L464.0 257.1 L465.0 255.9 L466.0 256.3 L467.0 256.6 L468.0 256.1 L469.0 256.4 L470.0 257.3 L471.0 257.3 L472.0 257.8 L473.0 257.5 L474.0 257.2 L475.0 258.0 L476.0 257.5 L477.0 256.8 L478.0 257.7 L479.0 258.7 L480.0 258.8 L481.0 259.1 L482.0 259.3 L483.0 258.7 L484.0 258.2 L485.0 257.5 L486.0 257.0 L487.0 258.1 L488.0 258.6 L489.0 258.1 L490.0 258.7 L491.0 258.7 L492.0 258.0 L493.0 258.8 L494.0 259.6 L495.0 259.1 L496.0 259.4 L497.0 259.5 L498.0 258.8 L499.0 259.2 L500.0 259.4 L501.0 259.1 L502.0 259.3 L503.0 258.9 L504.0 258.3 L505.0 258.4 L506.0 259.0 L507.0 259.1 L508.0 258.6 L509.0 258.1 L510.0 258.0 L511.0 258.9 L512.0 259.6 L513.0 259.9 L514.0 260.6 L515.0 260.6 L516.0 259.8 L517.0 259.9 L518.0 260.4 L519.0 260.0 L520.0 260.6 L521.0 261.4 L522.0 260.5 L523.0 259.8 L524.0 260.4 L525.0 261.5 L526.0 261.9 L527.0 261.0 L528.0 259.9 L529.0 259.9 L530.0 260.2 L531.0 259.9 L532.0 261.0 L533.0 261.9 L534.0 261.3 L535.0 261.1 L536.0 260.7 L537.0 260.5 L538.0 260.5 L539.0 260.2 L540.0 261.1 L541.0 262.3 L542.0 262.5 L543.0 261.8 L544.0 261.1 L545.0 261.2 L546.0 261.9 L547.0 262.5 L548.0 262.4 L549.0 262.0 L550.0 262.4 L551.0 262.1 L552.0 261.2 L553.0 261.0 L554.0 261.4 L555.0 261.4 L556.0 261.1 L557.0 261.5 L558.0 262.0 L559.0 262.2 L560.0 262.3 L561.0 262.2 L562.0 262.5 L563.0 262.7 L564.0 262.0 L565.0 261.4 L566.0 262.0 L567.0 262.9 L568.0 262.8 L569.0 262.6 L570.0 262.9 L571.0 262.9 L572.0 263.5 L573.0 263.4 L574.0 263.3 L575.0 263.7 L576.0 262.8 L577.0 262.6 L578.0 263.3 L579.0 263.6 L580.0 263.7 L581.0 263.9 L582.0 263.8 L583.0 263.1 L584.0 262.6 L585.0 263.1 L586.0 263.5 L587.0 263.0 L588.0 262.5 L589.0 262.0 L590.0 261.9 L591.0 262.7 L592.0 263.3 L593.0 262.8 L594.0 263.2 L595.0 264.3 L596.0 264.7 L597.0 264.9 L598.0 265.0 L599.0 264.8 L600.0 264.6 L601.0 264.2 L602.0 263.4 L603.0 263.0 L604.0 264.0 L605.0 264.8 L606.0 263.7 L607.0 263.2 L608.0 264.3 L609.0 265.4 L610.0 265.0 L611.0 263.9 L612.0 264.0 L613.0 264.2 L614.0 263.7 L615.0 263.4 L616.0 264.3 L617.0 264.7 L618.0 264.5 L619.0 264.2 L620.0 264.1 L621.0 264.5 L622.0 264.4 L623.0 264.4 L624.0 265.0 L625.0 264.8 L626.0 264.7 L627.0 265.1 L628.0 264.8 L629.0 265.0 L630.0 265.8 L631.0 265.9" fill="none" stroke="#0072bd" stroke-width="1"/><rect x="97.5" y="390.5" width="638.0" height="96.0" fill="#fff" stroke="#262626" stroke-width="1"/><path d="M139.5 390.5v5M139.5 486.5v-5" stroke="#262626"/><path d="M224.5 390.5v5M224.5 486.5v-5" stroke="#262626"/><path d="M309.5 390.5v5M309.5 486.5v-5" stroke="#262626"/><path d="M393.5 390.5v5M393.5 486.5v-5" stroke="#262626"/><path d="M478.5 390.5v5M478.5 486.5v-5" stroke="#262626"/><path d="M563.5 390.5v5M563.5 486.5v-5" stroke="#262626"/><path d="M648.5 390.5v5M648.5 486.5v-5" stroke="#262626"/><path d="M733.5 390.5v5M733.5 486.5v-5" stroke="#262626"/><path d="M97.5 405.5h5M735.5 405.5h-5" stroke="#262626"/><path d="M97.5 425.5h5M735.5 425.5h-5" stroke="#262626"/><path d="M97.5 445.5h5M735.5 445.5h-5" stroke="#262626"/><path d="M97.5 465.5h5M735.5 465.5h-5" stroke="#262626"/><path d="M97.5 485.5h5M735.5 485.5h-5" stroke="#262626"/><clipPath id="c2"><rect x="97.5" y="390.5" width="638.0" height="96.0"/></clipPath><path d="M190.0 382.5 L192.0 383.3 L194.0 384.1 L196.0 384.9 L198.0 385.6 L200.0 386.4 L202.0 387.1 L204.0 387.9 L206.0 388.6 L208.0 389.4 L210.0 390.1 L212.0 390.8 L214.0 391.6 L216.0 392.3 L218.0 393.0 L220.0 393.7 L222.0 394.4 L224.0 395.2 L226.0 395.9 L228.0 396.6 L230.0 397.3 L232.0 398.0 L234.0 398.6 L236.0 399.3 L238.0 400.0 L240.0 400.7 L242.0 401.4 L244.0 402.0 L246.0 402.7 L248.0 403.3 L250.0 404.0 L252.0 404.6 L254.0 405.3 L256.0 405.9 L258.0 406.6 L260.0 407.2 L262.0 407.8 L264.0 408.5 L266.0 409.1 L268.0 409.7 L270.0 410.3 L272.0 410.9 L274.0 411.5 L276.0 412.1 L278.0 412.7 L280.0 413.3 L282.0 413.9 L284.0 414.5 L286.0 415.1 L288.0 415.6 L290.0 416.2 L292.0 416.8 L294.0 417.3 L296.0 417.9 L298.0 418.4 L300.0 419.0 L302.0 419.5 L304.0 420.1 L306.0 420.6 L308.0 421.1 L310.0 421.7 L312.0 422.2 L314.0 422.7 L316.0 423.2 L318.0 423.7 L320.0 424.2 L322.0 424.8 L324.0 425.2 L326.0 425.7 L328.0 426.2 L330.0 426.7 L332.0 427.2 L334.0 427.7 L336.0 428.1 L338.0 428.6 L340.0 429.1 L342.0 429.5 L344.0 430.0 L346.0 430.4 L348.0 430.9 L350.0 431.3 L352.0 431.8 L354.0 432.2 L356.0 432.6 L358.0 433.1 L360.0 433.5 L362.0 433.9 L364.0 434.3 L366.0 434.7 L368.0 435.1 L370.0 435.5 L372.0 435.9 L374.0 436.3 L376.0 436.7 L378.0 437.1 L380.0 437.4 L382.0 437.8 L384.0 438.2 L386.0 438.5 L388.0 438.9 L390.0 439.3 L392.0 439.6 L394.0 440.0 L396.0 440.3 L398.0 440.6 L400.0 441.0 L402.0 441.3 L404.0 441.6 L406.0 441.9 L408.0 442.3 L410.0 442.6 L412.0 442.9 L414.0 443.2 L416.0 443.5 L418.0 443.8 L420.0 444.1 L422.0 444.3 L424.0 444.6 L426.0 444.9 L428.0 445.2 L430.0 445.4 L432.0 445.7 L434.0 446.0 L436.0 446.2 L438.0 446.5 L440.0 446.7 L442.0 446.9 L444.0 447.2 L446.0 447.4 L448.0 447.6 L450.0 447.9 L452.0 448.1 L454.0 448.3 L456.0 448.5 L458.0 448.7 L460.0 448.9 L462.0 449.1 L464.0 449.3 L466.0 449.5 L468.0 449.7 L470.0 449.8 L472.0 450.0 L474.0 450.2 L476.0 450.4 L478.0 450.5 L480.0 450.7 L482.0 450.8 L484.0 451.0 L486.0 451.1 L488.0 451.3 L490.0 451.4 L492.0 451.5 L494.0 451.6 L496.0 451.8 L498.0 451.9 L500.0 452.0 L502.0 452.1 L504.0 452.2 L506.0 452.3 L508.0 452.4 L510.0 452.5 L512.0 452.6 L514.0 452.6 L516.0 452.7 L518.0 452.8 L520.0 452.8 L522.0 452.9 L524.0 453.0 L526.0 453.0 L528.0 453.1 L530.0 453.1 L532.0 453.2 L534.0 453.2 L536.0 453.2 L538.0 453.2 L540.0 453.3 L542.0 453.3 L544.0 453.3 L546.0 453.3 L548.0 453.3 L550.0 453.3 L552.0 453.3 L554.0 453.3 L556.0 453.3 L558.0 453.2 L560.0 453.2 L562.0 453.2 L564.0 453.2 L566.0 453.1 L568.0 453.1 L570.0 453.0 L572.0 453.0 L574.0 452.9 L576.0 452.9 L578.0 452.8 L580.0 452.7 L582.0 452.6 L584.0 452.6 L586.0 452.5 L588.0 452.4 L590.0 452.3 L592.0 452.2 L594.0 452.1 L596.0 452.0 L598.0 451.9 L600.0 451.8 L602.0 451.6 L604.0 451.5 L606.0 451.4 L608.0 451.2 L610.0 451.1 L612.0 451.0 L614.0 450.8 L616.0 450.7 L618.0 450.5 L620.0 450.3 L622.0 450.2 L624.0 450.0 L626.0 449.8 L628.0 449.6 L630.0 449.4 L632.0 449.3 L634.0 449.1 L636.0 448.9 L638.0 448.7 L640.0 448.4 L642.0 448.2 L644.0 448.0 L646.0 447.8 L648.0 447.6 L650.0 447.3 L652.0 447.1 L654.0 446.8 L656.0 446.6 L658.0 446.3 L660.0 446.1 L662.0 445.8 L664.0 445.6 L666.0 445.3 L668.0 445.0 L670.0 444.7 L672.0 444.5 L674.0 444.2 L676.0 443.9 L678.0 443.6 L680.0 443.3 L682.0 443.0 L684.0 442.6 L686.0 442.3 L688.0 442.0 L690.0 441.7 L692.0 441.3 L694.0 441.0 L696.0 440.7 L698.0 440.3 L700.0 440.0 L702.0 439.6 L704.0 439.3 L706.0 438.9 L708.0 438.5 L710.0 438.1 L712.0 437.8 L714.0 437.4 L716.0 437.0 L718.0 436.6 L720.0 436.2 L722.0 435.8 L724.0 435.4 L726.0 435.0 L728.0 434.6 L730.0 434.1 L732.0 433.7 L734.0 433.3" fill="none" stroke="#0072bd" stroke-width="1" clip-path="url(#c2)"/><path d="M305 419.8 L306 419.8 L306 419.7 L307 419.7 L307 419.8 L308 419.8 L308 419.7 L309 419.7 L309 419.0 L310 419.0 L310 419.2 L311 419.2 L311 419.0 L312 419.0 L312 419.2 L313 419.2 L313 420.8 L314 420.8 L314 421.0 L315 421.0 L315 421.1 L316 421.1 L316 421.3 L317 421.3 L317 420.6 L318 420.6 L318 420.8 L319 420.8 L319 421.6 L320 421.6 L320 421.8 L321 421.8 L321 421.4 L322 421.4 L322 421.7 L323 421.7 L323 421.2 L324 421.2 L324 421.4 L325 421.4 L325 423.1 L326 423.1 L326 423.3 L327 423.3 L327 423.1 L328 423.1 L328 423.3 L329 423.3 L329 423.4 L330 423.4 L330 423.6 L331 423.6 L331 424.7 L332 424.7 L332 424.9 L333 424.9 L333 425.0 L334 425.0 L334 425.2 L335 425.2 L335 424.2 L336 424.2 L336 424.4 L337 424.4 L337 424.4 L338 424.4 L338 424.6 L339 424.6 L339 424.3 L340 424.3 L340 424.5 L341 424.5 L341 425.8 L342 425.8 L342 426.0 L343 426.0 L343 426.0 L344 426.0 L344 426.2 L345 426.2 L345 426.8 L346 426.8 L346 426.9 L347 426.9 L347 426.9 L348 426.9 L348 427.1 L349 427.1 L349 427.0 L350 427.0 L350 427.1 L351 427.1 L351 427.5 L352 427.5 L352 427.7 L353 427.7 L353 427.2 L354 427.2 L354 427.4 L355 427.4 L355 429.1 L356 429.1 L356 429.3 L357 429.3 L357 428.5 L358 428.5 L358 428.7 L359 428.7 L359 429.5 L360 429.5 L360 429.7 L361 429.7 L361 429.2 L362 429.2 L362 429.3 L363 429.3 L363 429.9 L364 429.9 L364 430.1 L365 430.1 L365 430.6 L366 430.6 L366 430.8 L367 430.8 L367 430.4 L368 430.4 L368 430.6 L369 430.6 L369 430.5 L370 430.5 L370 430.6 L371 430.6 L371 432.5 L372 432.5 L372 432.7 L373 432.7 L373 431.5 L374 431.5 L374 431.7 L375 431.7 L375 432.2 L376 432.2 L376 432.4 L377 432.4 L377 432.2 L378 432.2 L378 432.4 L379 432.4 L379 432.2 L380 432.2 L380 432.3 L381 432.3 L381 433.6 L382 433.6 L382 433.8 L383 433.8 L383 433.5 L384 433.5 L384 433.6 L385 433.6 L385 433.7 L386 433.7 L386 433.9 L387 433.9 L387 432.6 L388 432.6 L388 432.8 L389 432.8 L389 434.3 L390 434.3 L390 434.5 L391 434.5 L391 434.9 L392 434.9 L392 435.1 L393 435.1 L393 434.9 L394 434.9 L394 435.1 L395 435.1 L395 435.0 L396 435.0 L396 435.2 L397 435.2 L397 436.0 L398 436.0 L398 436.2 L399 436.2 L399 435.8 L400 435.8 L400 436.0 L401 436.0 L401 436.3 L402 436.3 L402 436.4 L403 436.4 L403 436.8 L404 436.8 L404 437.0 L405 437.0 L405 437.1 L406 437.1 L406 437.2 L407 437.2 L407 436.1 L408 436.1 L408 436.2 L409 436.2 L409 437.3 L410 437.3 L410 437.4 L411 437.4 L411 437.0 L412 437.0 L412 437.1 L413 437.1 L413 436.5 L414 436.5 L414 436.7 L415 436.7 L415 438.1 L416 438.1 L416 438.2 L417 438.2 L417 437.2 L418 437.2 L418 437.4 L419 437.4 L419 438.2 L420 438.2 L420 438.3 L421 438.3 L421 437.3 L422 437.3 L422 437.4 L423 437.4 L423 438.4 L424 438.4 L424 438.5 L425 438.5 L425 439.0 L426 439.0 L426 439.1 L427 439.1 L427 439.5 L428 439.5 L428 439.6 L429 439.6 L429 439.4 L430 439.4 L430 439.5 L431 439.5 L431 439.4 L432 439.4 L432 439.6 L433 439.6 L433 439.7 L434 439.7 L434 439.8 L435 439.8 L435 441.3 L436 441.3 L436 441.4 L437 441.4 L437 440.4 L438 440.4 L438 440.5 L439 440.5 L439 440.8 L440 440.8 L440 441.0 L441 441.0 L441 442.2 L442 442.2 L442 442.3 L443 442.3 L443 440.4 L444 440.4 L444 440.5 L445 440.5 L445 440.4 L446 440.4 L446 440.6 L447 440.6 L447 441.2 L448 441.2 L448 441.4 L449 441.4 L449 441.8 L450 441.8 L450 441.9 L451 441.9 L451 441.6 L452 441.6 L452 441.7 L453 441.7 L453 442.4 L454 442.4 L454 442.5 L455 442.5 L455 442.6 L456 442.6 L456 442.7 L457 442.7 L457 442.0 L458 442.0 L458 442.1 L459 442.1 L459 443.2 L460 443.2 L460 443.3 L461 443.3 L461 442.5 L462 442.5 L462 442.6 L463 442.6 L463 443.9 L464 443.9 L464 444.0 L465 444.0 L465 443.8 L466 443.8 L466 443.9 L467 443.9 L467 445.1 L468 445.1 L468 445.2 L469 445.2 L469 444.5 L470 444.5 L470 444.6 L471 444.6 L471 444.2 L472 444.2 L472 444.3 L473 444.3 L473 444.6 L474 444.6 L474 444.7 L475 444.7 L475 444.7 L476 444.7 L476 444.8 L477 444.8 L477 444.4 L478 444.4 L478 444.5 L479 444.5 L479 444.2 L480 444.2 L480 444.3 L481 444.3 L481 445.8 L482 445.8 L482 445.9 L483 445.9 L483 446.2 L484 446.2 L484 446.3 L485 446.3 L485 445.3 L486 445.3 L486 445.4 L487 445.4 L487 445.6 L488 445.6 L488 445.7 L489 445.7 L489 445.6 L490 445.6 L490 445.7 L491 445.7 L491 446.6 L492 446.6 L492 446.7 L493 446.7 L493 446.9 L494 446.9 L494 447.0 L495 447.0 L495 445.9 L496 445.9 L496 446.0 L497 446.0 L497 446.4 L498 446.4 L498 446.4 L499 446.4 L499 446.4 L500 446.4 L500 446.5 L501 446.5 L501 447.0 L502 447.0 L502 447.1 L503 447.1 L503 447.4 L504 447.4 L504 447.5 L505 447.5 L505 447.8 L506 447.8 L506 447.8 L507 447.8 L507 447.2 L508 447.2 L508 447.2 L509 447.2 L509 446.9 L510 446.9 L510 447.0 L511 447.0 L511 447.9 L512 447.9 L512 448.0 L513 448.0 L513 448.1 L514 448.1 L514 448.2 L515 448.2 L515 447.7 L516 447.7 L516 447.8 L517 447.8 L517 448.1 L518 448.1 L518 448.2 L519 448.2 L519 448.4 L520 448.4 L520 448.4 L521 448.4 L521 448.8 L522 448.8 L522 448.9 L523 448.9 L523 448.5 L524 448.5 L524 448.6 L525 448.6 L525 448.9 L526 448.9 L526 448.9 L527 448.9 L527 458.6 L526 458.6 L526 458.6 L525 458.6 L525 458.4 L524 458.4 L524 458.4 L523 458.4 L523 457.3 L522 457.3 L522 457.2 L521 457.2 L521 458.8 L520 458.8 L520 458.7 L519 458.7 L519 458.4 L518 458.4 L518 458.3 L517 458.3 L517 456.5 L516 456.5 L516 456.4 L515 456.4 L515 457.3 L514 457.3 L514 457.2 L513 457.2 L513 457.9 L512 457.9 L512 457.9 L511 457.9 L511 457.7 L510 457.7 L510 457.6 L509 457.6 L509 456.8 L508 456.8 L508 456.7 L507 456.7 L507 457.3 L506 457.3 L506 457.2 L505 457.2 L505 456.7 L504 456.7 L504 456.6 L503 456.6 L503 455.9 L502 455.9 L502 455.9 L501 455.9 L501 456.6 L500 456.6 L500 456.5 L499 456.5 L499 456.0 L498 456.0 L498 455.9 L497 455.9 L497 456.2 L496 456.2 L496 456.2 L495 456.2 L495 456.1 L494 456.1 L494 456.0 L493 456.0 L493 455.7 L492 455.7 L492 455.6 L491 455.6 L491 455.2 L490 455.2 L490 455.1 L489 455.1 L489 455.6 L488 455.6 L488 455.5 L487 455.5 L487 456.2 L486 456.2 L486 456.1 L485 456.1 L485 454.8 L484 454.8 L484 454.7 L483 454.7 L483 455.2 L482 455.2 L482 455.1 L481 455.1 L481 455.0 L480 455.0 L480 454.9 L479 454.9 L479 454.1 L478 454.1 L478 454.0 L477 454.0 L477 454.5 L476 454.5 L476 454.4 L475 454.4 L475 454.5 L474 454.5 L474 454.4 L473 454.4 L473 454.5 L472 454.5 L472 454.4 L471 454.4 L471 454.5 L470 454.5 L470 454.4 L469 454.4 L469 453.8 L468 453.8 L468 453.7 L467 453.7 L467 454.0 L466 454.0 L466 453.9 L465 453.9 L465 453.8 L464 453.8 L464 453.7 L463 453.7 L463 453.3 L462 453.3 L462 453.2 L461 453.2 L461 453.2 L460 453.2 L460 453.1 L459 453.1 L459 453.5 L458 453.5 L458 453.4 L457 453.4 L457 452.2 L456 452.2 L456 452.1 L455 452.1 L455 452.5 L454 452.5 L454 452.4 L453 452.4 L453 451.9 L452 451.9 L452 451.8 L451 451.8 L451 452.1 L450 452.1 L450 452.0 L449 452.0 L449 451.6 L448 451.6 L448 451.5 L447 451.5 L447 450.7 L446 450.7 L446 450.6 L445 450.6 L445 451.3 L444 451.3 L444 451.1 L443 451.1 L443 451.4 L442 451.4 L442 451.3 L441 451.3 L441 451.0 L440 451.0 L440 450.8 L439 450.8 L439 450.6 L438 450.6 L438 450.5 L437 450.5 L437 450.4 L436 450.4 L436 450.3 L435 450.3 L435 449.8 L434 449.8 L434 449.7 L433 449.7 L433 449.9 L432 449.9 L432 449.8 L431 449.8 L431 449.9 L430 449.9 L430 449.8 L429 449.8 L429 449.6 L428 449.6 L428 449.5 L427 449.5 L427 448.6 L426 448.6 L426 448.5 L425 448.5 L425 448.7 L424 448.7 L424 448.6 L423 448.6 L423 448.8 L422 448.8 L422 448.6 L421 448.6 L421 448.3 L420 448.3 L420 448.2 L419 448.2 L419 446.7 L418 446.7 L418 446.6 L417 446.6 L417 447.6 L416 447.6 L416 447.4 L415 447.4 L415 446.7 L414 446.7 L414 446.5 L413 446.5 L413 447.9 L412 447.9 L412 447.8 L411 447.8 L411 447.6 L410 447.6 L410 447.4 L409 447.4 L409 447.3 L408 447.3 L408 447.1 L407 447.1 L407 446.8 L406 446.8 L406 446.6 L405 446.6 L405 445.6 L404 445.6 L404 445.5 L403 445.5 L403 444.7 L402 444.7 L402 444.6 L401 444.6 L401 445.9 L400 445.9 L400 445.7 L399 445.7 L399 445.0 L398 445.0 L398 444.8 L397 444.8 L397 445.6 L396 445.6 L396 445.5 L395 445.5 L395 444.8 L394 444.8 L394 444.7 L393 444.7 L393 444.0 L392 444.0 L392 443.8 L391 443.8 L391 443.8 L390 443.8 L390 443.6 L389 443.6 L389 443.1 L388 443.1 L388 443.0 L387 443.0 L387 443.6 L386 443.6 L386 443.4 L385 443.4 L385 442.7 L384 442.7 L384 442.6 L383 442.6 L383 443.1 L382 443.1 L382 443.0 L381 443.0 L381 443.1 L380 443.1 L380 442.9 L379 442.9 L379 442.3 L378 442.3 L378 442.2 L377 442.2 L377 442.5 L376 442.5 L376 442.3 L375 442.3 L375 442.4 L374 442.4 L374 442.2 L373 442.2 L373 439.8 L372 439.8 L372 439.6 L371 439.6 L371 440.4 L370 440.4 L370 440.2 L369 440.2 L369 441.6 L368 441.6 L368 441.4 L367 441.4 L367 439.5 L366 439.5 L366 439.3 L365 439.3 L365 439.8 L364 439.8 L364 439.6 L363 439.6 L363 439.8 L362 439.8 L362 439.6 L361 439.6 L361 439.4 L360 439.4 L360 439.2 L359 439.2 L359 438.8 L358 438.8 L358 438.6 L357 438.6 L357 438.2 L356 438.2 L356 438.0 L355 438.0 L355 437.9 L354 437.9 L354 437.7 L353 437.7 L353 437.8 L352 437.8 L352 437.6 L351 437.6 L351 437.8 L350 437.8 L350 437.6 L349 437.6 L349 437.5 L348 437.5 L348 437.3 L347 437.3 L347 436.9 L346 436.9 L346 436.7 L345 436.7 L345 434.8 L344 434.8 L344 434.7 L343 434.7 L343 436.3 L342 436.3 L342 436.1 L341 436.1 L341 435.6 L340 435.6 L340 435.4 L339 435.4 L339 435.8 L338 435.8 L338 435.6 L337 435.6 L337 435.2 L336 435.2 L336 435.0 L335 435.0 L335 434.2 L334 434.2 L334 434.0 L333 434.0 L333 433.8 L332 433.8 L332 433.6 L331 433.6 L331 432.1 L330 432.1 L330 431.9 L329 431.9 L329 432.8 L328 432.8 L328 432.6 L327 432.6 L327 432.3 L326 432.3 L326 432.1 L325 432.1 L325 431.8 L324 431.8 L324 431.6 L323 431.6 L323 431.6 L322 431.6 L322 431.4 L321 431.4 L321 430.3 L320 430.3 L320 430.1 L319 430.1 L319 431.0 L318 431.0 L318 430.7 L317 430.7 L317 430.0 L316 430.0 L316 429.7 L315 429.7 L315 429.2 L314 429.2 L314 429.0 L313 429.0 L313 430.0 L312 430.0 L312 429.8 L311 429.8 L311 429.1 L310 429.1 L310 428.8 L309 428.8 L309 428.9 L308 428.9 L308 428.3 L307 428.3 L307 426.8 L306 426.8 L306 426.2 L305 426.2Z" fill="#ff0000" stroke="#ff0000" stroke-width=".6"/></svg>
<div class="t" style="left:336px;width:160px;text-align:center;top:165.5px;font-size:14.3px;font-weight:700;color:#000;letter-spacing:.3px">Line scan</div>
<div class="t" style="left:32.0px;width:60px;text-align:right;top:181.0px;font-size:12.6px;color:#262626">5</div>
<div class="t" style="left:32.0px;width:60px;text-align:right;top:212.0px;font-size:12.6px;color:#262626">0</div>
<div class="t" style="left:32.0px;width:60px;text-align:right;top:244.0px;font-size:12.6px;color:#262626">-5</div>
<div class="t" style="left:32.0px;width:60px;text-align:right;top:276.0px;font-size:12.6px;color:#262626">-10</div>
<div class="t" style="left:57.5px;width:80px;text-align:center;top:289.5px;font-size:12.6px;color:#262626">0</div>
<div class="t" style="left:163.8px;width:80px;text-align:center;top:289.5px;font-size:12.6px;color:#262626">0.5</div>
<div class="t" style="left:270.2px;width:80px;text-align:center;top:289.5px;font-size:12.6px;color:#262626">1</div>
<div class="t" style="left:376.5px;width:80px;text-align:center;top:289.5px;font-size:12.6px;color:#262626">1.5</div>
<div class="t" style="left:482.8px;width:80px;text-align:center;top:289.5px;font-size:12.6px;color:#262626">2</div>
<div class="t" style="left:589.2px;width:80px;text-align:center;top:289.5px;font-size:12.6px;color:#262626">2.5</div>
<div class="t" style="left:695.5px;width:80px;text-align:center;top:289.5px;font-size:12.6px;color:#262626">3</div>
<div class="t" style="left:98px;top:173px;font-size:13px;color:#404040;font-weight:300">&times;</div>
<div class="t" style="left:108px;top:172px;font-size:12.6px;color:#262626">10</div>
<div class="t" style="left:122.5px;top:167px;font-size:10.5px;color:#262626">-7</div>
<div class="t" style="left:701px;top:315px;font-size:13px;color:#404040;font-weight:300">&times;</div>
<div class="t" style="left:711px;top:314px;font-size:12.6px;color:#262626">10</div>
<div class="t" style="left:725.5px;top:309px;font-size:10.5px;color:#262626">-3</div>
<div class="t" style="left:216px;width:400px;text-align:center;top:331px;font-size:14.8px;font-weight:700;color:#000;letter-spacing:.15px">Fitting</div>
<div class="t" style="left:216px;width:400px;text-align:center;top:350.5px;font-size:14.8px;font-weight:700;color:#000;letter-spacing:.15px">Radius of curvature = 4.9535m</div>
<div class="t" style="left:216px;width:400px;text-align:center;top:370.5px;font-size:14.8px;font-weight:700;color:#000;letter-spacing:.15px">Fitting Score = 0.088991</div>
<div class="t" style="left:32.0px;width:60px;text-align:right;top:399.0px;font-size:12.6px;color:#262626">5</div>
<div class="t" style="left:32.0px;width:60px;text-align:right;top:419.0px;font-size:12.6px;color:#262626">0</div>
<div class="t" style="left:32.0px;width:60px;text-align:right;top:438.5px;font-size:12.6px;color:#262626">-5</div>
<div class="t" style="left:32.0px;width:60px;text-align:right;top:458.5px;font-size:12.6px;color:#262626">-10</div>
<div class="t" style="left:32.0px;width:60px;text-align:right;top:478.5px;font-size:12.6px;color:#262626">-15</div>
<div class="t" style="left:99.5px;width:80px;text-align:center;top:495.5px;font-size:12.6px;color:#262626">-2</div>
<div class="t" style="left:184.5px;width:80px;text-align:center;top:495.5px;font-size:12.6px;color:#262626">-1</div>
<div class="t" style="left:269.5px;width:80px;text-align:center;top:495.5px;font-size:12.6px;color:#262626">0</div>
<div class="t" style="left:353.5px;width:80px;text-align:center;top:495.5px;font-size:12.6px;color:#262626">1</div>
<div class="t" style="left:438.5px;width:80px;text-align:center;top:495.5px;font-size:12.6px;color:#262626">2</div>
<div class="t" style="left:523.5px;width:80px;text-align:center;top:495.5px;font-size:12.6px;color:#262626">3</div>
<div class="t" style="left:608.5px;width:80px;text-align:center;top:495.5px;font-size:12.6px;color:#262626">4</div>
<div class="t" style="left:693.5px;width:80px;text-align:center;top:495.5px;font-size:12.6px;color:#262626">5</div>
<div class="t" style="left:98px;top:379px;font-size:13px;color:#404040;font-weight:300">&times;</div>
<div class="t" style="left:108px;top:378px;font-size:12.6px;color:#262626">10</div>
<div class="t" style="left:122.5px;top:373px;font-size:10.5px;color:#262626">-7</div>
<div class="t" style="left:701px;top:520px;font-size:13px;color:#404040;font-weight:300">&times;</div>
<div class="t" style="left:711px;top:519px;font-size:12.6px;color:#262626">10</div>
<div class="t" style="left:725.5px;top:514px;font-size:10.5px;color:#262626">-3</div>
<div class="a" style="left:16px;top:602px;width:670px;height:317px;border:1px solid #4a4a4a;border-radius:7px;background:linear-gradient(90deg,#f4f6f8,#fbfcfd 40%,#eef1f4 55%,#fafbfc 70%,#f6f8fa);box-shadow:1px 3px 10px 1px rgba(0,0,0,.45)"></div>
<svg style="left:23px;top:609px" width="16" height="16"><rect x=".5" y=".5" width="15" height="15" fill="#f0f0f0" stroke="#8a9098"/><rect x=".5" y=".5" width="15" height="2" fill="#a8c0dc"/><use href="#i-ml" x="1" y="2" width="14" height="14"/></svg>
<div class="t" style="left:44px;top:611px;font-size:12px;color:#000;font-weight:400;">Slider</div>
<div class="a" style="left:577px;top:602px;width:104px;height:19px;border-radius:0 0 5px 5px;overflow:hidden;border:1px solid #9aa0a8;border-top:none;background:linear-gradient(rgba(255,255,255,.7),rgba(235,238,242,.7))"><div class="a" style="left:27px;top:0;width:1px;height:19px;background:#b0b6be"></div><div class="a" style="left:55px;top:0;width:1px;height:19px;background:#b0b6be"></div><div class="a" style="left:8px;top:10px;width:12px;height:4px;border:1px solid #5a5a5a;background:#fff"></div><div class="a" style="left:36px;top:3px;width:12px;height:10px;border:1px solid #b8b8b8"><div class="a" style="left:2px;top:2px;width:6px;height:4px;border:1px solid #b8b8b8"></div></div><svg style="left:72px;top:3px" width="14" height="12"><path d="M2.5 2l9 8M11.5 2l-9 8" stroke="#5a5e68" stroke-width="4" stroke-linecap="square"/><path d="M2.5 2l9 8M11.5 2l-9 8" stroke="#fff" stroke-width="2.2"/></svg></div>
<div class="a" style="left:22px;top:631px;width:659px;height:280px;background:#f0f0f0;border:1px solid #8a8a8a"></div>
<div class="t" style="left:69px;top:659px;font-size:14.6px;color:#000;font-weight:400;">Y</div>
<div class="t" style="left:228px;top:650px;font-size:19.3px;color:#000;font-weight:400;transform:scaleX(.975);transform-origin:0 0">move line</div>
<div class="t" style="left:337px;top:650px;font-size:18.6px;color:#000;font-weight:400;transform:scaleX(.885);transform-origin:0 0">X: 693</div>
<div class="t" style="left:578px;top:655px;font-size:16.4px;color:#000;font-weight:400;transform:scaleX(.89);transform-origin:0 0">In Y verk&uuml;rzen</div>
<div class="a" style="left:49px;top:682px;width:50px;height:149px;background:#e6e6e6;border-right:2px solid #8a8a8a;border-bottom:2px solid #8a8a8a"></div>
<div class="a" style="left:49px;top:682px;width:48px;height:14px;background:#f0f0f0;border-bottom:1px solid #8a8a8a"></div>
<svg style="left:69px;top:686px" width="8" height="5"><path d="M0 4h8L4 0z" fill="#333"/></svg>
<div class="a" style="left:49px;top:696px;width:1px;height:56px;background:#a0a0a0"></div>
<div class="a" style="left:49px;top:752px;width:48px;height:9px;background:#f4f4f4;border-top:1px solid #fff;border-bottom:1px solid #8a8a8a"></div>
<div class="a" style="left:49px;top:761px;width:1px;height:55px;background:#a0a0a0"></div>
<div class="a" style="left:49px;top:816px;width:48px;height:13px;background:#f0f0f0;border-top:1px solid #fff"></div>
<svg style="left:69px;top:820px" width="8" height="5"><path d="M0 0h8L4 4z" fill="#333"/></svg>
<div class="a" style="left:603px;top:682px;width:50px;height:149px;background:#e6e6e6;border-right:2px solid #8a8a8a;border-bottom:2px solid #8a8a8a"></div>
<div class="a" style="left:603px;top:682px;width:48px;height:14px;background:#f0f0f0;border-bottom:1px solid #8a8a8a"></div>
<svg style="left:623px;top:686px" width="8" height="5"><path d="M0 4h8L4 0z" fill="#333"/></svg>
<div class="a" style="left:603px;top:696px;width:1px;height:56px;background:#a0a0a0"></div>
<div class="a" style="left:603px;top:752px;width:48px;height:9px;background:#f4f4f4;border-top:1px solid #fff;border-bottom:1px solid #8a8a8a"></div>
<div class="a" style="left:603px;top:761px;width:1px;height:55px;background:#a0a0a0"></div>
<div class="a" style="left:603px;top:816px;width:48px;height:13px;background:#f0f0f0;border-top:1px solid #fff"></div>
<svg style="left:623px;top:820px" width="8" height="5"><path d="M0 0h8L4 4z" fill="#333"/></svg>
<div class="a" style="left:122px;top:683px;width:291px;height:48px;background:#e6e6e6;border-right:2px solid #8a8a8a;border-bottom:2px solid #8a8a8a"></div>
<div class="a" style="left:122px;top:683px;width:15px;height:46px;background:#f0f0f0;border-right:1px solid #8a8a8a"></div>
<svg style="left:127px;top:703px" width="5" height="8"><path d="M4 0v8L0 4z" fill="#333"/></svg>
<div class="a" style="left:300px;top:683px;width:21px;height:46px;background:#f2f2f2;border-left:1px solid #fff;border-right:1px solid #8a8a8a"></div>
<div class="a" style="left:397px;top:683px;width:14px;height:46px;background:#f0f0f0;border-left:1px solid #fff"></div>
<svg style="left:402px;top:703px" width="5" height="8"><path d="M0 0v8L4 4z" fill="#333"/></svg>
<div class="btn" style="left:437px;top:682px;width:148px;height:48px;font-size:15.6px;padding-top:16px">Werte speichern</div>
<div class="t" style="left:138px;top:760px;font-size:18.6px;color:#000;font-weight:400;transform:scaleX(.85);transform-origin:0 0">X1:</div>
<div class="t" style="left:287px;top:760px;font-size:18.6px;color:#000;font-weight:400;transform:scaleX(.85);transform-origin:0 0">X2:</div>
<div class="btn" style="left:137px;top:782px;width:99px;height:48px;font-size:10.7px;padding-top:19px">Interval Grenze 1</div>
<div class="btn" style="left:287px;top:782px;width:99px;height:48px;font-size:10.7px;padding-top:19px">Interval Grenze 2</div>
<div class="btn" style="left:437px;top:782px;width:122px;height:48px;font-size:10.7px;padding-top:19px">Mittelwert berechnen</div>
<div class="t" style="left:437px;top:836px;font-size:18.6px;color:#000;font-weight:400;transform:scaleX(.86);transform-origin:0 0">Mittelwert:</div>
<div class="btn" style="left:51px;top:859px;width:149px;height:49px;font-size:10.7px;padding-top:19px">Auto Linescan</div>
</body></html>
